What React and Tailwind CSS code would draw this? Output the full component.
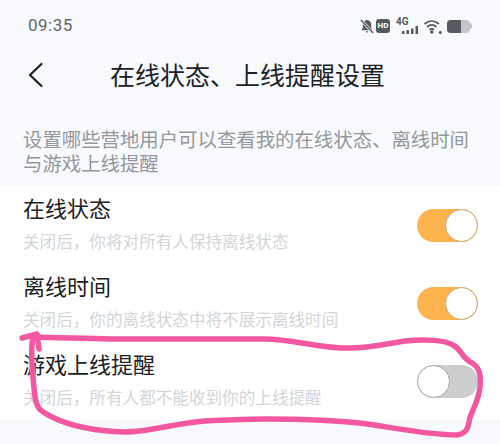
import React from 'react';

const rows = [
  { title: '在线状态', sub: '关闭后\uFF0C你将对所有人保持离线状态', on: true },
  { title: '离线时间', sub: '关闭后\uFF0C你的离线状态中将不展示离线时间', on: true },
  { title: '游戏上线提醒', sub: '关闭后\uFF0C所有人都不能收到你的上线提醒', on: false },
];

const Toggle = ({ on }) => (
  <div className={`flex h-[33px] w-[61px] rounded-full ${on ? 'justify-end bg-[#fdb44e]' : 'justify-start bg-[#cdcdcd]'}`}>
    <div className={`h-[33px] w-[33px] rounded-full border bg-white ${on ? 'border-[#c9a873]' : 'border-[#a9a9a9]'}`} />
  </div>
);

const StatusIcons = () => (
  <div className="flex items-center text-[#555a60]">
    {/* muted bell */}
    <svg width="14" height="15" viewBox="0 0 14 16" fill="currentColor">
      <path d="M7 1c3 0 4.500 2.400 4.500 5v3.500L13 12H1l1.500-2.500V6C2.500 3.400 4 1 7 1z" />
      <path d="M5.500 13h3L7 15z" />
      <path d="M0.500 1 13.500 15" stroke="#f7f9fc" strokeWidth="3" />
      <path d="M0.500 1 13.500 15" stroke="currentColor" strokeWidth="1.500" />
    </svg>
    <div className="ml-[2px] flex h-[14px] w-[14px] items-center justify-center rounded-[3px] bg-[#555a60] font-['Roboto',sans-serif] text-[8px] leading-none font-bold text-white">
      HD
    </div>
    <div className="relative ml-[6px] h-[16px] w-[22px]">
      <span className="absolute top-[-2px] left-0 font-['Roboto',sans-serif] text-[10px] leading-[12px] font-bold">4G</span>
      <svg className="absolute right-0 bottom-0" width="16" height="8" viewBox="0 0 16 8" fill="currentColor">
        <rect x="0" y="5" width="2.500" height="3" />
        <rect x="4.500" y="4" width="2.500" height="4" />
        <rect x="9" y="2.500" width="2.500" height="5.500" />
        <rect x="13.500" y="0" width="2.500" height="8" />
      </svg>
    </div>
    <svg className="ml-[6px]" width="18" height="15" viewBox="0 0 18 15" fill="none" stroke="currentColor" strokeWidth="1.700">
      <path d="M0.500 5c4.500-4 10-4 14.500 0" />
      <path d="M3 8c3-2.600 6.500-2.600 9.500 0" />
      <path d="M5.500 10.800c1.500-1.200 3-1.200 4.500 0" />
      <circle cx="7.800" cy="13" r="0.900" fill="currentColor" />
      <circle cx="16.300" cy="13.500" r="0.700" fill="currentColor" />
    </svg>
    <div className="ml-[5px] flex items-center">
      <div className="flex h-[13px] w-[23px] overflow-hidden rounded-[4px] bg-[#c4c6c9]">
        <div className="h-full w-[14px] bg-[#555a60]" />
      </div>
      <div className="h-[6px] w-[2px] rounded-r-sm bg-[#c4c6c9]" />
    </div>
  </div>
);

export default function App() {
  return (
    <div className="relative h-[444px] w-[500px] overflow-hidden bg-[#f7f9fc] font-['Noto_Sans_CJK_SC','Noto_Sans',sans-serif]">
      {/* Status bar */}
      <div className="flex h-[52px] items-center justify-between pr-[28px] pl-[28px]">
        <span className="font-['Roboto',sans-serif] text-[17px] tracking-[0.5px] text-[#62666b]">09:35</span>
        <StatusIcons />
      </div>

      {/* Header */}
      <div className="flex h-[45px] items-center pl-[28px]">
        <svg width="16" height="26" viewBox="0 0 16 26" fill="none" stroke="#1c2126" strokeWidth="2.200" strokeLinecap="round" strokeLinejoin="round">
          <path d="M13.500 2 2 13 13.500 24" />
        </svg>
        <h1 className="ml-[66px] text-[25px] leading-none font-normal text-[#1c2126]">在线状态、上线提醒设置</h1>
      </div>

      {/* Description */}
      <p className="mt-[30px] px-[23px] text-[19.400px] leading-[24px] text-[#94989d]">
        设置哪些营地用户可以查看我的在线状态、离线时间与游戏上线提醒
      </p>

      {/* Settings list */}
      <div className="mt-[11px] flex h-[234px] flex-col bg-white">
        {rows.map((row) => (
          <div key={row.title} className="flex h-[78px] items-center justify-between pr-[22px] pl-[23px]">
            <div className="pb-[6px]">
              <div className="text-[22px] leading-[30px] text-[#1c2126]">{row.title}</div>
              <div className="mt-[7px] text-[16.600px] leading-[24px] text-[#d3d5d7]">{row.sub}</div>
            </div>
            <Toggle on={row.on} />
          </div>
        ))}
      </div>

      {/* Hand-drawn pink markup */}
      <svg className="absolute inset-0" width="500" height="444" viewBox="0 0 500 444" fill="none" stroke="#f2579f" strokeWidth="5.500" strokeLinecap="round" strokeLinejoin="round">
        <path d="M22 338 37 334 39 349" />
        <path d="M33 337C30 350 33 380 35 397C37 410 42 412 52 417C70 426 95 431 125 432C150 432 175 423 205 421C225 420 240 419 265 419C300 419 335 420 367 424C395 428 430 435 457 435C465 434 468 430 469 422C470 412 478 405 480 387C481 375 480 368 472 363C462 358 462 350 453 345C445 340 425 339 405 341C385 344 365 349 345 348C320 348 290 339 265 339C230 339 150 339 110 339C85 338 60 338 33 337" />
      </svg>
    </div>
  );
}
